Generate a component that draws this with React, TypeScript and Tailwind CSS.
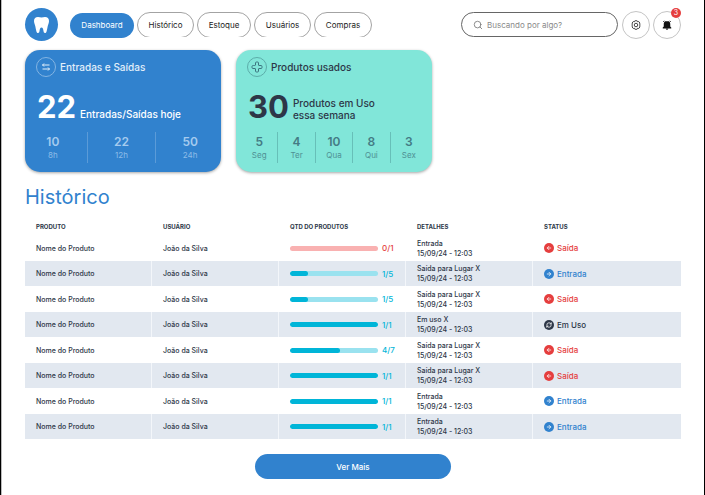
import { ArrowLeft, ArrowRight, Cross, RefreshCw, Search } from "lucide-react";

type Status = "Saída" | "Entrada" | "Em Uso";

interface Movement {
  count: number;
  total: number;
  detail: string;
  status: Status;
}

const movements: Movement[] = [
  { count: 0, total: 1, detail: "Entrada", status: "Saída" },
  { count: 1, total: 5, detail: "Saída para Lugar X", status: "Entrada" },
  { count: 1, total: 5, detail: "Saída para Lugar X", status: "Saída" },
  { count: 1, total: 1, detail: "Em uso X", status: "Em Uso" },
  { count: 4, total: 7, detail: "Saída para Lugar X", status: "Saída" },
  { count: 1, total: 1, detail: "Saída para Lugar X", status: "Saída" },
  { count: 1, total: 1, detail: "Entrada", status: "Entrada" },
  { count: 1, total: 1, detail: "Entrada", status: "Entrada" },
];

const statusStyles = {
  "Saída": { text: "text-[#e53e3e]", dot: "bg-[#e53e3e]", Icon: ArrowLeft },
  "Entrada": { text: "text-[#3182ce]", dot: "bg-[#3182ce]", Icon: ArrowRight },
  "Em Uso": { text: "text-[#2d3748]", dot: "bg-[#2d3748]", Icon: RefreshCw },
};

const navItems = [
  { label: "Histórico", width: "w-[57px]" },
  { label: "Estoque", width: "w-[54px]" },
  { label: "Usuários", width: "w-[57px]" },
  { label: "Compras", width: "w-[58px]" },
];

function ToothIcon() {
  return (
    <svg viewBox="0 0 30 32" className="h-[16px] w-[15px]" fill="#fff" aria-hidden="true">
      <path d="M8 0C3 0 0 3 0 8c0 4 1.500 6 2.500 10 1 4 1.300 8 2.500 11.500C5.700 31.300 6.500 32 8 32c2 0 2.700-1.500 3-4 .4-3.500 1.500-7 4-7s3.600 3.500 4 7c.3 2.500 1 4 3 4 1.500 0 2.300-.7 3-2.500C26.200 26 26.500 22 27.500 18 28.500 14 30 12 30 8c0-5-3-8-8-8-2.500 0-4.500 1-7 1S10.500 0 8 0z" />
    </svg>
  );
}

function GearIcon() {
  return (
    <svg viewBox="0 0 20 20" className="size-[10px]" fill="none" stroke="#333" aria-hidden="true">
      <path
        d="M7.800 1.500h4.400l1 2 2.300-.4 2.400 3-.9 2 1.500 1.900-1.500 1.900.9 2-2.400 3-2.300-.4-1 2H7.800l-1-2-2.300.4-2.400-3 .9-2L1.500 10 3 8.100l-.9-2 2.400-3 2.300.4z"
        strokeWidth="1.800"
        strokeLinejoin="round"
      />
      <circle cx="10" cy="10" r="3.500" strokeWidth="1.800" />
    </svg>
  );
}

function BellIcon() {
  return (
    <svg viewBox="0 0 20 20" className="size-[10px]" fill="#111" aria-hidden="true">
      <path d="M6 2.500h8c1.500 1 2.500 3 2.500 6V13l2 2v2h-17v-2l2-2V8.500c0-3 1-5 2.500-6zM7.500 17.500h5a2.500 2 0 0 1-5 0z" />
      <path d="M4.500 1.500 2 4M15.500 1.500 18 4" stroke="#111" strokeWidth="1.400" />
    </svg>
  );
}

function SwapIcon() {
  return (
    <svg viewBox="0 0 20 20" className="size-[10px]" fill="none" stroke="currentColor" strokeWidth="2" aria-hidden="true">
      <path d="M17 6H3M6 3 3 6l3 3M3 14h14M14 11l3 3-3 3" />
    </svg>
  );
}

function Stat({ value, label }: { value: string; label: string }) {
  return (
    <li className="flex flex-1 flex-col items-center justify-center">
      <span className="text-[12px] leading-[16px] font-semibold">{value}</span>
      <span className="text-[8px] leading-[11px] opacity-80">{label}</span>
    </li>
  );
}

function Progress({ count, total }: { count: number; total: number }) {
  const empty = count === 0;
  return (
    <div className="flex items-center gap-1">
      <div className={`h-[5px] w-[88px] overflow-hidden rounded-full ${empty ? "bg-[#f9b1b1]" : "bg-[#9ae2ef]"}`}>
        <div className="h-full rounded-full bg-[#00b5d8]" style={{ width: `${(count / total) * 100}%` }} />
      </div>
      <span className={`text-[8px] leading-[10px] ${empty ? "text-[#e53e3e]" : "text-[#00b5d8]"}`}>
        {count}/{total}
      </span>
    </div>
  );
}

function Header() {
  return (
    <header className="flex items-center">
      <div className="flex size-[33px] items-center justify-center rounded-full bg-[#3182ce]">
        <ToothIcon />
      </div>
      <nav className="ml-3" aria-label="Principal">
        <ul className="flex items-start gap-[3px] text-[8px]">
          <li className="pt-px">
            <button type="button" className="h-[25px] w-[64px] rounded-full bg-[#3182ce] text-white">
              Dashboard
            </button>
          </li>
          {navItems.map((item) => (
            <li key={item.label} className="h-[25px] overflow-hidden">
              <button type="button" className={`h-[26px] rounded-full border border-[#a3a3a3] text-[#222] ${item.width}`}>
                {item.label}
              </button>
            </li>
          ))}
        </ul>
      </nav>
      <label className="ml-auto flex h-[25px] w-[157px] items-center gap-1 rounded-full border border-[#666] pl-[11px]">
        <Search className="size-[10px] shrink-0 text-[#777]" strokeWidth={2} aria-hidden="true" />
        <input
          type="search"
          aria-label="Buscar"
          placeholder="Buscando por algo?"
          className="w-full min-w-0 bg-transparent text-[8px] outline-none placeholder:text-[#8a8a8a]"
        />
      </label>
      <button type="button" aria-label="Configurações" className="ml-1 flex size-[28px] items-center justify-center rounded-full border border-[#c4c4c4]">
        <GearIcon />
      </button>
      <button type="button" aria-label="Notificações" className="relative ml-[3px] flex size-[28px] items-center justify-center rounded-full border border-[#c4c4c4]">
        <BellIcon />
        <span className="absolute -top-[4px] -right-[1px] flex size-[10px] items-center justify-center rounded-full bg-[#e53e3e] text-[7px] leading-none text-white">
          3
        </span>
      </button>
    </header>
  );
}

export default function App() {
  return (
    <div className="min-h-screen border-x border-black bg-white font-['Inter',sans-serif] text-[#2d3748]">
      <div className="min-h-screen border-l border-[#bbb] px-[23px] pt-2">
        <Header />
        <main>
          <div className="mt-[9px] flex gap-[15px]">
            <section className="h-[122px] w-[196px] rounded-[15px] bg-[#3182ce] pt-[7px] text-white shadow-[0_1px_3px_rgba(0,0,0,0.35)]">
              <h2 className="flex items-center gap-1 pl-[11px] text-[10px] leading-[20px] font-medium text-[#e2effa]">
                <span className="flex size-[20px] items-center justify-center rounded-full border border-[#83b4e2]">
                  <SwapIcon />
                </span>
                Entradas e Saídas
              </h2>
              <p className="mt-[10px] flex items-baseline gap-1 pl-3">
                <span className="text-[31px] leading-[40px] font-bold">22</span>
                <span className="text-[10px] leading-[12px] font-medium">Entradas/Saídas hoje</span>
              </p>
              <ul className="-mr-[3px] -ml-[6px] mt-[5px] flex h-[31px] divide-x divide-[#5b9bd8] text-[#a5cbee]">
                <Stat value="10" label="8h" />
                <Stat value="22" label="12h" />
                <Stat value="50" label="24h" />
              </ul>
            </section>
            <section className="h-[122px] w-[196px] rounded-[15px] bg-[#81e6d9] pt-[7px] shadow-[0_1px_3px_rgba(0,0,0,0.35)]">
              <h2 className="flex items-center gap-1 pl-[11px] text-[10px] leading-[20px] font-medium">
                <span className="flex size-[20px] items-center justify-center rounded-full border border-[#5cada9]">
                  <Cross className="size-[12px] text-[#3c7580]" strokeWidth={2} aria-hidden="true" />
                </span>
                Produtos usados
              </h2>
              <p className="mt-[10px] flex items-center gap-1 pl-3">
                <span className="text-[31px] leading-[40px] font-bold">30</span>
                <span className="pt-[3px] text-[10px] leading-[12px] font-medium">
                  Produtos em Uso
                  <br />
                  essa semana
                </span>
              </p>
              <ul className="mt-[5px] flex h-[31px] divide-x divide-[#67bfb8] px-[5px] text-[#447b84]">
                <Stat value="5" label="Seg" />
                <Stat value="4" label="Ter" />
                <Stat value="10" label="Qua" />
                <Stat value="8" label="Qui" />
                <Stat value="3" label="Sex" />
              </ul>
            </section>
          </div>

          <h1 className="mt-3 text-[20px] leading-[26px] text-[#3182ce]">Histórico</h1>

          <table className="mt-2 w-full table-fixed border-separate border-spacing-0 text-left text-[7px] leading-[10px]">
            <thead>
              <tr className="h-[17px] text-[6px] font-bold">
                <th scope="col" className="w-[127px] pl-[11px]">PRODUTO</th>
                <th scope="col" className="w-[127px] pl-[11px]">USUÁRIO</th>
                <th scope="col" className="w-[127px] pl-[11px]">QTD DO PRODUTOS</th>
                <th scope="col" className="w-[127px] pl-[11px]">DETALHES</th>
                <th scope="col" className="pl-[11px]">STATUS</th>
              </tr>
            </thead>
            <tbody className="font-medium">
              {movements.map((row, index) => {
                const { text, dot, Icon } = statusStyles[row.status];
                return (
                  <tr key={index} className="h-[26px] divide-x divide-[#f3f6fa] odd:divide-white even:h-[25px] even:bg-[#e2e8f0]">
                    <td className="pt-px pl-[11px]">Nome do Produto</td>
                    <td className="pt-px pl-[11px]">João da Silva</td>
                    <td className="pl-[11px]">
                      <Progress count={row.count} total={row.total} />
                    </td>
                    <td className="pt-px pl-[11px]">
                      {row.detail}
                      <br />
                      15/09/24 - 12:03
                    </td>
                    <td className="pl-[11px]">
                      <span className={`flex items-center gap-[3px] text-[8px] ${text}`}>
                        <span className={`flex size-[10px] items-center justify-center rounded-full text-white ${dot}`}>
                          <Icon className="size-[6px]" strokeWidth={3} aria-hidden="true" />
                        </span>
                        {row.status}
                      </span>
                    </td>
                  </tr>
                );
              })}
            </tbody>
          </table>

          <button type="button" className="mx-auto mt-[15px] block h-[25px] w-[196px] rounded-full bg-[#3182ce] text-[8px] font-medium text-white">
            Ver Mais
          </button>
        </main>
      </div>
    </div>
  );
}
